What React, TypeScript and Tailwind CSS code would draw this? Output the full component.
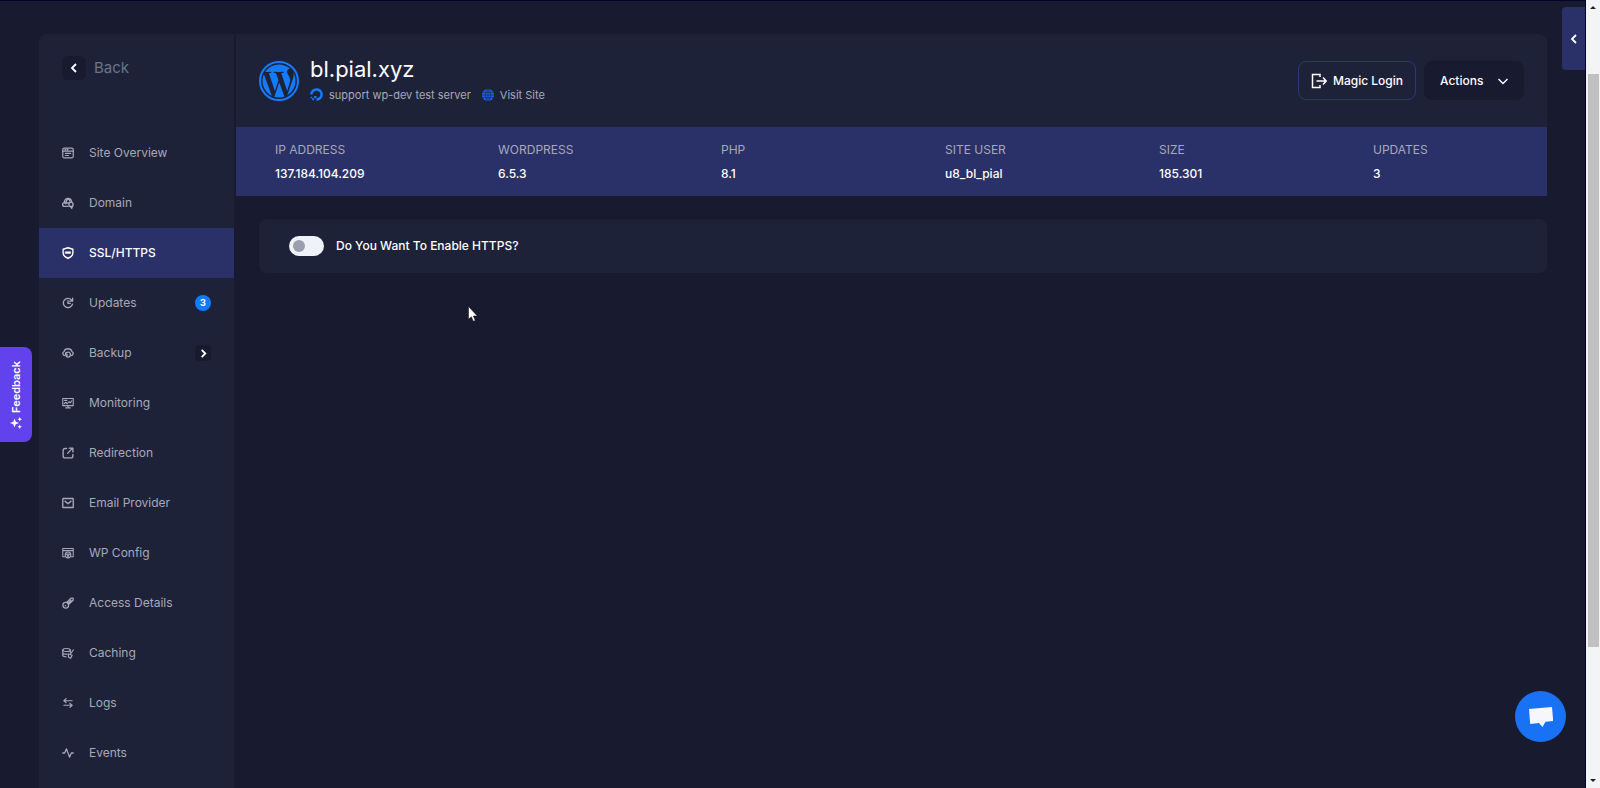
import { useState } from 'react';
import type { ReactNode } from 'react';
import { FaDigitalOcean } from 'react-icons/fa';

type IconProps = { children: ReactNode; width?: number };

function MenuIcon({ children, width = 1.6 }: IconProps) {
  return (
    <svg
      viewBox="0 0 16 16"
      className="size-3 shrink-0"
      fill="none"
      stroke="currentColor"
      strokeWidth={width}
      strokeLinecap="round"
      strokeLinejoin="round"
      aria-hidden="true"
    >
      {children}
    </svg>
  );
}

function Chevron({ d, className, width = 1.8 }: { d: string; className: string; width?: number }) {
  return (
    <svg viewBox="0 0 10 10" className={className} fill="none" stroke="currentColor" strokeWidth={width} aria-hidden="true">
      <path d={d} />
    </svg>
  );
}

const LEFT = 'M7 1 3 5l4 4';
const RIGHT = 'M3 1l4 4-4 4';

function WordPressLogo() {
  return (
    <svg viewBox="8 8 496 496" className="size-10 text-[#147aff]" fill="currentColor" aria-hidden="true">
      <circle cx="256" cy="256" r="235" fill="none" stroke="currentColor" strokeWidth="26" />
      <path
        transform="translate(10 10) scale(0.96)"
        d="M61.7 169.4l101.5 278C92.2 413 43.3 340.2 43.3 256c0-30.900 6.600-60.100 18.400-86.600zm337.900 75.900c0-26.300-9.400-44.500-17.500-58.700-10.800-17.500-20.900-32.400-20.900-49.900 0-19.600 14.800-37.800 35.700-37.800.9 0 1.800.1 2.800.2-37.900-34.700-88.300-55.900-143.700-55.900-74.300 0-139.700 38.100-177.800 95.900 5 .2 9.700.3 13.700.3 22.200 0 56.700-2.700 56.700-2.700 11.500-.7 12.800 16.200 1.400 17.500 0 0-11.500 1.300-24.300 2l77.500 230.400L249.800 247l-33.100-90.800c-11.500-.7-22.300-2-22.300-2-11.500-.7-10.100-18.200 1.300-17.500 0 0 35.100 2.700 56 2.700 22.200 0 56.700-2.700 56.700-2.700 11.500-.7 12.800 16.200 1.400 17.500 0 0-11.500 1.300-24.300 2l76.900 228.700 21.200-70.900c9-29.400 16-50.500 16-68.700zm-139.900 29.300l-63.800 185.500c19.100 5.600 39.200 8.700 60.100 8.700 24.800 0 48.500-4.300 70.600-12.100-.6-.9-1.100-1.900-1.500-2.900l-65.400-179.200zm183-120.700c.9 6.800 1.400 14 1.400 21.900 0 21.600-4 45.800-16.200 76.200l-65 187.900C426.200 403 468.700 334.500 468.700 256c0-37-9.400-71.800-26-102.100z"
      />
    </svg>
  );
}

type Item = { label: string; icon: ReactNode; active?: boolean; badge?: number; expandable?: boolean };

const items: Item[] = [
  {
    label: 'Site Overview',
    icon: (
      <MenuIcon>
        <rect x="1" y="1.5" width="14" height="13" rx="2" />
        <path d="M1 5.5h14M4 3.5h1M7 3.5h1M4.5 8.5h7M4.5 11.3h4" />
      </MenuIcon>
    ),
  },
  {
    label: 'Domain',
    icon: (
      <MenuIcon width={1.8}>
        <path d="M8 12.500H3.500a2.500 2.500 0 0 1-.5-5C3 4 5.500 2 8 2s4.500 1.500 5 4.500" />
        <path d="M5 9c0-3 1-5 3-7 1.500 1 2.500 2.500 2.800 4M3.500 8H9" />
        <circle cx="12" cy="10" r="2.800" />
        <path d="m11 12.500 2 2.500 1-3" />
      </MenuIcon>
    ),
  },
  {
    label: 'SSL/HTTPS',
    active: true,
    icon: (
      <MenuIcon width={1.8}>
        <path d="M8 1 1.500 3v5c0 3.500 3 5.700 6.500 7 3.500-1.300 6.500-3.500 6.500-7V3z" />
        <path d="M4.500 6.300h7v2.400h-7z" fill="currentColor" strokeWidth="0.6" />
      </MenuIcon>
    ),
  },
  {
    label: 'Updates',
    badge: 3,
    icon: (
      <MenuIcon width={1.8}>
        <path d="M14 9.500A6.200 6.200 0 1 1 12.700 4L14 5.500M14.200 1.500v4h-4" />
        <path d="M8 5v3.500h3" />
      </MenuIcon>
    ),
  },
  {
    label: 'Backup',
    expandable: true,
    icon: (
      <MenuIcon width={1.8}>
        <path d="M3.300 11.500A3 3 0 0 1 2.700 6 5.700 5.700 0 0 1 13.300 6a3 3 0 0 1-.6 5.500" />
        <path d="M5 10.500a3.200 3.200 0 1 1 6 1 3.200 3.200 0 0 1-5.300.9M4.800 8v2.700h2.500" />
      </MenuIcon>
    ),
  },
  {
    label: 'Monitoring',
    icon: (
      <MenuIcon width={1.5}>
        <rect x="1" y="2" width="14" height="9.5" />
        <path d="M5 14.500h6M8 11.500v3M3 9l2-2 2 2 2.500-3L11 8l2-3M3.500 4.500h3" />
      </MenuIcon>
    ),
  },
  {
    label: 'Redirection',
    icon: (
      <MenuIcon width={1.8}>
        <path d="M6 2H4a2.500 2.500 0 0 0-2.500 2.500V12A2.500 2.500 0 0 0 4 14.500h8a2.500 2.500 0 0 0 2.500-2.500v-2M7.500 8.500l6.500-7M9.500 1.500h5v5" />
      </MenuIcon>
    ),
  },
  {
    label: 'Email Provider',
    icon: (
      <MenuIcon width={1.8}>
        <rect x="1" y="2" width="14" height="12" rx="0.5" />
        <path d="m4 5.500 4 3.500 4-3.500" />
      </MenuIcon>
    ),
  },
  {
    label: 'WP Config',
    icon: (
      <MenuIcon width={1.4}>
        <path d="M3.500 13H1V2h14v11h-2.500M1 4.800h14" />
        <circle cx="8" cy="10.5" r="3.8" />
        <path d="M5 9.500h6M6.500 9.500 8 13.500l1.500-4M8 14.500V15" />
      </MenuIcon>
    ),
  },
  {
    label: 'Access Details',
    icon: (
      <MenuIcon width={1.7}>
        <circle cx="5" cy="11" r="3.8" />
        <path d="M6.500 7 12 1.500h2.800v2.800L9 9.700M8 8.300l4-4M4.300 11.500h.6" />
      </MenuIcon>
    ),
  },
  {
    label: 'Caching',
    icon: (
      <MenuIcon width={1.6}>
        <ellipse cx="6" cy="4" rx="5" ry="2" />
        <path d="M1 4v7c0 1 2 2 4.500 2M11 4v3M1 7.500c0 1.200 2.500 2 5 2M15 4l-3.500 5M8 9l5.500 2-2 4-2.500-1z" />
      </MenuIcon>
    ),
  },
  {
    label: 'Logs',
    icon: (
      <MenuIcon>
        <path d="M13.500 5H2.500M5.500 2.200 2.500 5l3 2.500M2.500 11h11M10.500 8.500l3 2.500-3 2.800" />
      </MenuIcon>
    ),
  },
  {
    label: 'Events',
    icon: (
      <MenuIcon width={1.7}>
        <path d="M1 8h2.500L6 2.500l4 11L12.500 8H15" />
      </MenuIcon>
    ),
  },
];

const stats = [
  ['IP ADDRESS', '137.184.104.209'],
  ['WORDPRESS', '6.5.3'],
  ['PHP', '8.1'],
  ['SITE USER', 'u8_bl_pial'],
  ['SIZE', '185.301'],
  ['UPDATES', '3'],
];

function Sidebar() {
  return (
    <nav className="w-[195px] shrink-0 rounded-tl-lg bg-[#1e2238]" aria-label="Site">
      <div className="flex h-[94px] items-start px-[23px] pt-[22px]">
        <a href="#back" className="flex items-center gap-2 text-[15px] leading-6 text-[#6e728a]">
          <span className="flex size-6 items-center justify-center rounded-md bg-[#181a2f] text-white">
            <Chevron d={LEFT} className="size-[10px]" />
          </span>
          Back
        </a>
      </div>
      <ul>
        {items.map((item) => (
          <li key={item.label}>
            <a
              href={'#' + item.label}
              className={
                item.active
                  ? 'flex h-[50px] items-center bg-[#2a3068] px-[23px] text-xs font-medium text-white'
                  : 'flex h-[50px] items-center px-[23px] text-xs text-[#a7a9ba]'
              }
            >
              {item.icon}
              <span className="ml-[15px] flex-1 whitespace-nowrap">{item.label}</span>
              {item.badge && (
                <span className="flex size-4 items-center justify-center rounded-full bg-[#147aff] text-[9px] font-bold text-white">
                  {item.badge}
                </span>
              )}
              {item.expandable && (
                <span className="flex size-4 items-center justify-center rounded bg-[#181a2f] text-white">
                  <Chevron d={RIGHT} className="size-[9px]" width={2} />
                </span>
              )}
            </a>
          </li>
        ))}
      </ul>
    </nav>
  );
}

function Header() {
  return (
    <header className="flex h-[93px] items-center rounded-tr-lg bg-[#1e2238] px-[23px]">
      <WordPressLogo />
      <div className="ml-[11px] flex-1">
        <h1 className="text-[22px] leading-7 text-white">bl.pial.xyz</h1>
        <div className="flex items-center text-[11px] leading-6 text-[#a7a9ba]">
          <FaDigitalOcean className="size-[13px] text-[#147aff]" />
          <span className="ml-1.5">support wp-dev test server</span>
          <a href="#visit" className="ml-[11px] flex items-center gap-1.5">
            <svg viewBox="0 0 16 16" className="size-3" aria-hidden="true">
              <circle cx="8" cy="8" r="8" fill="#1c62f5" />
              <g fill="none" stroke="#1f2a5c" strokeWidth="1">
                <ellipse cx="8" cy="8" rx="3.5" ry="7.5" />
                <path d="M8 0v16M0 8h16M1.500 4.500h13M1.500 11.500h13" />
              </g>
            </svg>
            Visit Site
          </a>
        </div>
      </div>
      <div className="flex gap-2 text-xs font-medium text-white">
        <button type="button" className="flex h-[39px] items-center gap-1.5 rounded-lg border border-[#2b3876] px-3">
          <svg viewBox="0 0 16 16" className="size-4" fill="none" stroke="currentColor" strokeWidth="1.5" aria-hidden="true">
            <path d="M9 4V1.500H1.500v13H9V12M5.500 8h9.500M12 4.500 15.200 8 12 11.500" />
          </svg>
          Magic Login
        </button>
        <button type="button" className="flex h-[39px] w-[100px] items-center justify-between rounded-lg bg-[#181a2f] px-4">
          Actions
          <Chevron d="M0.500 3 5 7.500 9.500 3" className="size-[10px]" width={1.4} />
        </button>
      </div>
    </header>
  );
}

function HttpsCard() {
  const [enabled, setEnabled] = useState(false);
  return (
    <section className="mt-[23px] ml-[23px] flex h-[54px] items-center rounded-lg bg-[#1e2238] px-[30px]">
      <label className="flex cursor-pointer items-center gap-3 text-xs font-medium text-white">
        <input
          type="checkbox"
          role="switch"
          checked={enabled}
          onChange={(e) => setEnabled(e.target.checked)}
          className="h-5 w-[35px] appearance-none rounded-full bg-[#eff2f6] p-1 before:block before:size-3 before:rounded-full before:bg-[#9b9eae] checked:bg-[#147aff] checked:before:ml-[15px] checked:before:bg-white"
        />
        Do You Want To Enable HTTPS?
      </label>
    </section>
  );
}

export default function App() {
  return (
    <div className="flex h-screen overflow-hidden bg-[#181a2f] font-['Inter','DejaVu_Sans',sans-serif]">
      <div className="relative flex min-w-0 flex-1 gap-0.5 overflow-hidden border-t border-r border-[#03032b] pt-[33px] pr-[38px] pl-[39px]">
        <Sidebar />
        <main className="min-w-0 flex-1">
          <Header />
          <dl className="grid h-[69px] grid-cols-[223fr_223fr_224fr_214fr_214fr_174fr] items-center bg-[#2a3068] pl-[39px]">
            {stats.map(([name, value]) => (
              <div key={name} className="text-xs leading-6">
                <dt className="text-[#a7a9ba]">{name}</dt>
                <dd className="font-medium text-white">{value}</dd>
              </div>
            ))}
          </dl>
          <HttpsCard />
        </main>

        <button
          type="button"
          aria-label="Open panel"
          className="absolute top-[6px] right-0 flex h-[63px] w-[23px] items-center justify-center rounded-l bg-[#2a3068] text-white"
        >
          <Chevron d={LEFT} className="size-[10px]" />
        </button>

        <button
          type="button"
          className="absolute top-[346px] left-0 flex h-[95px] w-8 items-center justify-center rounded-r-lg bg-[#6142ed] text-[11px] leading-4 font-semibold text-white"
        >
          <span className="flex rotate-180 items-center gap-1 [writing-mode:vertical-rl]">
            <svg viewBox="0 0 16 16" className="size-3 rotate-180" fill="currentColor" aria-hidden="true">
              <path d="M6 2l1.700 4.300L12 8 7.700 9.700 6 14 4.300 9.700 0 8l4.300-1.700zM13 0l.9 2.100L16 3l-2.100.9L13 6l-.9-2.100L10 3l2.100-.9zM13 10l.9 2.100 2.100.9-2.100.9L13 16l-.9-2.100L10 13l2.100-.9z" />
            </svg>
            Feedback
          </span>
        </button>

        <button
          type="button"
          aria-label="Chat"
          className="absolute right-[19px] bottom-[46px] flex size-[51px] items-center justify-center rounded-full bg-[#1972f5]"
        >
          <svg viewBox="0 0 24 22" className="h-[22px] w-6" fill="#f5f7fa" aria-hidden="true">
            <path d="M0 3 23 1 24.200 15 16.500 15.800 13.500 21 10 17.100 1.200 18z" />
          </svg>
        </button>

        <svg viewBox="0 0 10 16" className="absolute top-[305px] left-[468px] h-4 w-[10px]" fill="#fff" stroke="#111" strokeWidth="0.5" aria-hidden="true">
          <path d="M.5.5v12.800l2.800-2.600 2 4.600 2-.9-2-4.400h4z" />
        </svg>
      </div>

      <div className="flex w-[14px] shrink-0 flex-col items-center bg-[#f3f4f6] py-[6px]" aria-hidden="true">
        <svg viewBox="0 0 6 3" className="h-[3px] w-1.5">
          <path d="M0 3l3-3 3 3z" fill="#222" />
        </svg>
        <div className="mt-[65px] h-[573px] w-[11px] bg-[#c1c1c1]" />
        <svg viewBox="0 0 6 3" className="mt-auto h-[3px] w-1.5">
          <path d="M0 0h6L3 3z" fill="#222" />
        </svg>
      </div>
    </div>
  );
}
